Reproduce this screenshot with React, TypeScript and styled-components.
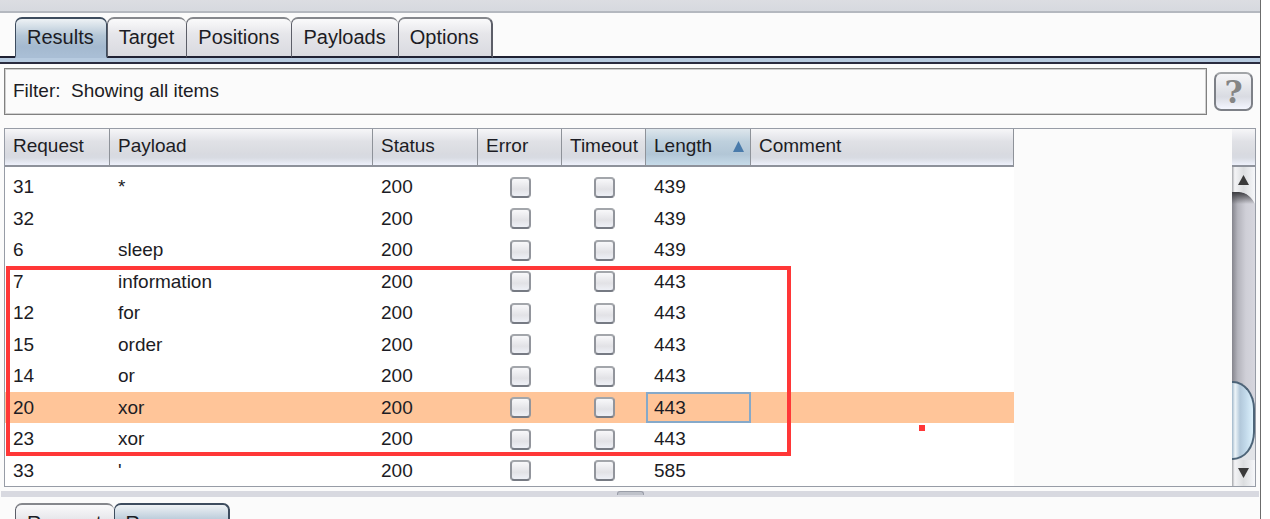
import React from "react";
import styled, { createGlobalStyle, css } from "styled-components";

const GlobalStyle = createGlobalStyle`
  * { box-sizing: border-box; }
  body {
    margin: 0;
    background: #ffffff;
    overflow: hidden;
    font-family: "Liberation Sans", Arial, sans-serif;
    font-size: 19px;
    line-height: 24px;
    color: #1c1c24;
  }
  button { font: inherit; color: inherit; padding: 0; margin: 0; border: 0; background: none; text-align: left; }
`;

const Window = styled.main`
  height: 100vh;
  margin-right: 9px;
  overflow: hidden;
  display: flex;
  flex-direction: column;
  background: #fbfbfb;
  border-right: 1px solid #6c6c6c;
`;

const TopStrip = styled.div`
  flex: none;
  height: 13px;
  background: linear-gradient(#dcdde2, #d6d9df);
  border-bottom: 2px solid #b4b8bf;
`;

const TabBar = styled.div<{ $top: number }>`
  flex: none;
  display: flex;
  padding: ${(p) => p.$top}px 15px 0;
`;

const Tab = styled.button<{ $active?: boolean }>`
  position: relative;
  height: 41px;
  padding: 0 12px 2px 11px;
  border: 1px solid #5c5e68;
  border-top: 2px solid #85878c;
  border-right-width: 0;
  border-bottom: 2px solid #1f2133;
  border-radius: 7px 7px 0 0;
  background: linear-gradient(#fafafb, #e6e6ea 40%, #d9dae0);
  font-size: 20px;
  &:last-child { border-right-width: 2px; }
  ${(p) =>
    p.$active &&
    css`
      border-color: #3d4c5e;
      border-right-width: 1px;
      border-bottom-color: #a9bed5;
      background: linear-gradient(#eef2f5, #b4c6d6 45%, #a4b9cf 75%, #a9bed5);
    `}
`;

const TabLine = styled.div`
  flex: none;
  height: 8px;
  margin-top: -2px;
  border-top: 2px solid #1f2133;
  border-bottom: 2px solid #2a2c40;
  background: #b7cbe0;
`;

const FilterRow = styled.div`
  flex: none;
  display: flex;
  align-items: center;
  gap: 7px;
  padding: 4px 7px 13px 4px;
`;

const FilterButton = styled.button`
  flex: 1;
  height: 47px;
  padding: 0 8px 2px;
  border: 1px solid #808080;
  outline: 1px solid #d0d0d0;
  outline-offset: -2px;
  white-space: pre;
`;

const HelpButton = styled.button`
  width: 39px;
  height: 39px;
  border: 2px solid #7d8087;
  border-top-color: #a2a5a8;
  border-radius: 7px;
  background: linear-gradient(#f6f6f8, #dddfe5 55%, #d9dbe2 65%, #f4f6ff);
  color: #858585;
  font: bold 31px/34px "DejaVu Serif", serif;
  text-align: center;
`;

const TablePanel = styled.section`
  flex: none;
  position: relative;
  display: flex;
  justify-content: space-between;
  margin: 0 4px;
  border: 1px solid #979ca6;
`;

const headerFill = "linear-gradient(#f6f6f8, #e0e1e6 35%, #d8dae0 70%, #d8dbe2 80%, #eef1fb)";
const sortedFill = "linear-gradient(#dde6ec, #bed0dd 35%, #b2c6d6 70%, #c6dbe9)";

const Grid = styled.table`
  flex: none;
  width: 1009px;
  table-layout: fixed;
  border-collapse: separate;
  border-spacing: 0;
  background: #ffffff;
`;

const HeadCell = styled.th<{ $sorted?: boolean }>`
  height: 38px;
  padding: 0 0 2px 8px;
  font-weight: normal;
  text-align: left;
  white-space: nowrap;
  border-right: 1px solid #8e9299;
  border-bottom: 2px solid #8e929b;
  background: ${(p) => (p.$sorted ? sortedFill : headerFill)};
`;

const SortButton = styled.button`
  display: flex;
  width: 100%;
  align-items: center;
  justify-content: space-between;
  padding-right: 6px;
`;

const Body = styled.tbody`
  &::before {
    content: "";
    display: table-row;
    height: 4px;
  }
`;

const Row = styled.tr<{ $selected?: boolean }>`
  height: 32px;
  &:nth-child(even) { height: 31px; }
  background: ${(p) => (p.$selected ? "#ffc599" : "transparent")};
`;

const Cell = styled.td<{ $focused?: boolean }>`
  padding: 0 0 0 8px;
  white-space: nowrap;
  ${(p) =>
    p.$focused &&
    css`
      outline: 2px solid #86a9c9;
      outline-offset: -2px;
    `}
`;

const CheckCell = styled.td`
  padding: 0;
  text-align: center;
`;

const Check = styled.input`
  appearance: none;
  display: block;
  width: 21px;
  height: 21px;
  margin: 0 auto;
  border: 2px solid #92959c;
  border-top-color: #a3a6ab;
  border-bottom-color: #767a83;
  border-radius: 4px;
  background: linear-gradient(#f8f8fa, #e2e2e6 60%, #eef0f6);
`;

const ScrollColumn = styled.div`
  flex: none;
  width: 23px;
  display: flex;
  flex-direction: column;
`;

const Corner = styled.div`
  height: 38px;
  background: ${headerFill};
  border-bottom: 2px solid #8e929b;
`;

const Track = styled.div`
  flex: 1;
  display: flex;
  flex-direction: column;
  background: linear-gradient(90deg, #85858d, #b4b4bc 25%, #cfcfd7 60%, #d6d6de);
`;

const ArrowButton = styled.button`
  flex: none;
  display: block;
  svg { display: block; }
`;

const Thumb = styled.div`
  height: 79px;
  border: 2px solid #4d6478;
  border-left-width: 0;
  border-radius: 0 22px 22px 0 / 0 28px 28px 0;
  background: linear-gradient(90deg, #9fb6c9, #eef5f9 15%, #b2c8da 38%, #c2d9ea 65%, #dcf1fc);
`;

const ThumbBed = styled.div`
  flex: none;
  background: linear-gradient(transparent 50%, #e2e4e8 50%);
`;

const Spacer = styled.div`
  flex: 1;
`;

const Highlight = styled.div`
  position: absolute;
  left: 1px;
  top: 137px;
  width: 785px;
  height: 190px;
  border: 4px solid #ff3737;
  pointer-events: none;
`;

const Dot = styled.div`
  position: absolute;
  left: 914px;
  top: 296px;
  width: 6px;
  height: 6px;
  background: #ff3737;
`;

const Splitter = styled.div`
  flex: none;
  display: flex;
  justify-content: center;
  height: 6px;
  margin: 4px 1px 0;
  background: #d8d9e0;
`;

const Grip = styled.div`
  width: 27px;
  height: 4px;
  border: 1px solid #9a9ea8;
  border-bottom: 0;
  border-radius: 3px 3px 0 0;
  background: #bfc2ca;
`;

type Item = [string, string, string];

const items: Item[] = [
  ["31", "*", "439"],
  ["32", "", "439"],
  ["6", "sleep", "439"],
  ["7", "information", "443"],
  ["12", "for", "443"],
  ["15", "order", "443"],
  ["14", "or", "443"],
  ["20", "xor", "443"],
  ["23", "xor", "443"],
  ["33", "'", "585"],
];

const widths = [105, 263, 105, 84, 84, 105, 263];

export default function App() {
  return (
    <>
      <GlobalStyle />
      <Window>
        <TopStrip />
        <TabBar $top={4} role="tablist">
          <Tab role="tab" aria-selected $active>Results</Tab>
          {["Target", "Positions", "Payloads", "Options"].map((t) => (
            <Tab key={t} role="tab">{t}</Tab>
          ))}
        </TabBar>
        <TabLine />
        <FilterRow>
          <FilterButton>{"Filter:  Showing all items"}</FilterButton>
          <HelpButton>?</HelpButton>
        </FilterRow>
        <TablePanel>
          <Grid>
            <colgroup>
              {widths.map((w, i) => (
                <col key={i} width={w} />
              ))}
            </colgroup>
            <thead>
              <tr>
                <HeadCell>Request</HeadCell>
                <HeadCell>Payload</HeadCell>
                <HeadCell>Status</HeadCell>
                <HeadCell>Error</HeadCell>
                <HeadCell>Timeout</HeadCell>
                <HeadCell $sorted aria-sort="ascending">
                  <SortButton>
                    Length
                    <svg width="11" height="11" viewBox="0 0 11 11" aria-hidden="true">
                      <path d="M5.5 0 11 11H0Z" fill="#4a7bab" />
                    </svg>
                  </SortButton>
                </HeadCell>
                <HeadCell>Comment</HeadCell>
              </tr>
            </thead>
            <Body>
              {items.map(([request, payload, length]) => (
                <Row key={request} $selected={request === "20"}>
                  <Cell>{request}</Cell>
                  <Cell>{payload}</Cell>
                  <Cell>200</Cell>
                  <CheckCell><Check type="checkbox" aria-label={`Error ${request}`} /></CheckCell>
                  <CheckCell><Check type="checkbox" aria-label={`Timeout ${request}`} /></CheckCell>
                  <Cell $focused={request === "20"}>{length}</Cell>
                  <Cell />
                </Row>
              ))}
            </Body>
          </Grid>
          <ScrollColumn>
            <Corner />
            <Track>
              <ArrowButton aria-label="Scroll up">
                <svg width="23" height="37" viewBox="0 0 23 37">
                  <defs>
                    <linearGradient id="cap">
                      <stop offset="0" stopColor="#a4a6aa" />
                      <stop offset="0.12" stopColor="#f4f4f6" />
                      <stop offset="0.5" stopColor="#dcdee0" />
                      <stop offset="1" stopColor="#f6f7fa" />
                    </linearGradient>
                    <linearGradient id="shade" x2="0" y2="1">
                      <stop offset="0" stopColor="#3c3c40" />
                      <stop offset="1" stopColor="#3c3c40" stopOpacity="0" />
                    </linearGradient>
                  </defs>
                  <path d="M0 25H7C14 25 20 30 23 37H0Z" fill="url(#shade)" />
                  <path d="M0 0H23V37C20 30 14 25 7 25H0Z" fill="url(#cap)" />
                  <path d="M11.5 8 17 18H6Z" fill="#3a3a3a" />
                </svg>
              </ArrowButton>
              <Spacer />
              <ThumbBed><Thumb /></ThumbBed>
              <ArrowButton aria-label="Scroll down">
                <svg width="23" height="26" viewBox="0 0 23 26">
                  <path d="M0 0H23V26H0Z" fill="url(#cap)" />
                  <path d="M11.5 18 17 8H6Z" fill="#3a3a3a" />
                </svg>
              </ArrowButton>
            </Track>
          </ScrollColumn>
          <Highlight />
          <Dot />
        </TablePanel>
        <Splitter><Grip /></Splitter>
        <TabBar $top={6} role="tablist">
          <Tab role="tab">Request</Tab>
          <Tab role="tab" aria-selected $active>Response</Tab>
        </TabBar>
      </Window>
    </>
  );
}
